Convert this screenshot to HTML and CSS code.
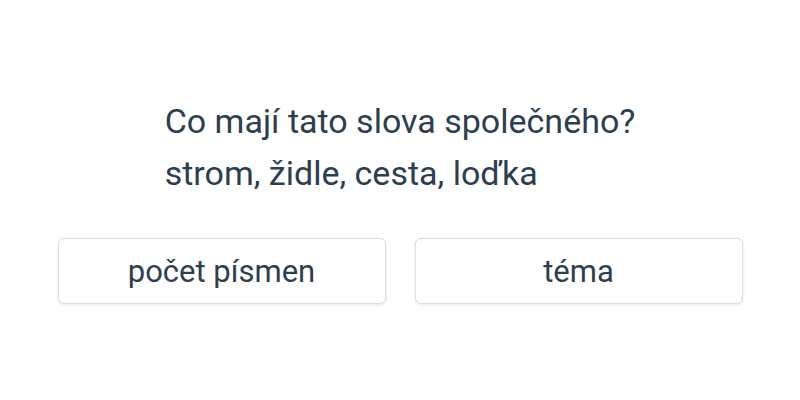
FILE: index.html
```html
<!DOCTYPE html>
<html lang="cs">
<head>
<meta charset="utf-8">
<link rel="stylesheet" href="styles.css">
</head>
<body>
<main class="quiz">
  <div class="question">
    <p class="line">Co mají tato slova společného?</p>
    <p class="line">strom, židle, cesta, loďka</p>
  </div>
  <div class="answers">
    <button class="answer">počet písmen</button>
    <button class="answer">téma</button>
  </div>
</main>
</body>
</html>
```

FILE: styles.css
```css
html, body {
  margin: 0;
  padding: 0;
  background: #ffffff;
}
body {
  font-family: Roboto, "Noto Sans", sans-serif;
  color: #2c3e50;
  width: 800px;
  height: 400px;
}
.quiz {
  display: flex;
  flex-direction: column;
  align-items: center;
  padding-top: 95px;
}
.question {
  display: flex;
  flex-direction: column;
  align-items: flex-start;
}
.line {
  margin: 0;
  font-size: 34px;
  line-height: 52px;
}
.answers {
  display: flex;
  gap: 29px;
  margin-top: 39px;
}
.answer {
  width: 328px;
  height: 66px;
  background: #fff;
  border: 1px solid #dcdcdc;
  border-radius: 6px;
  box-shadow: 0 1px 3px rgba(0,0,0,0.1);
  font-family: inherit;
  font-size: 31px;
  color: #2c3e50;
  padding: 0;
  cursor: pointer;
}
```
